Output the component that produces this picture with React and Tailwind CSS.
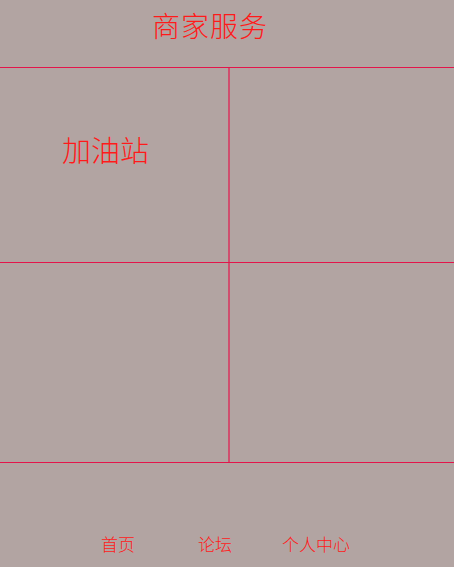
export default function App() {
  const font = { fontFamily: '"Noto Sans CJK SC", "Noto Sans", sans-serif' };
  return (
    <div className="w-[454px] h-[567px] bg-[#b2a4a2] flex flex-col text-[#ff1a1a] overflow-hidden" style={font}>
      <div className="h-[67px] flex items-start pl-[152px] pt-[7px]">
        <span className="text-[28px] leading-[36px] tracking-[1px] font-light">商家服务</span>
      </div>
      <div className="h-px bg-[#e3154b]"></div>
      <div className="flex h-[194px]">
        <div className="w-[228px] pl-[62px] pt-[63px]">
          <span className="text-[29px] leading-[36px] font-light">加油站</span>
        </div>
        <div className="w-[2px] bg-[#e3154b]/60"></div>
        <div className="flex-1"></div>
      </div>
      <div className="h-px bg-[#e3154b]"></div>
      <div className="flex h-[199px]">
        <div className="w-[228px]"></div>
        <div className="w-[2px] bg-[#e3154b]/60"></div>
        <div className="flex-1"></div>
      </div>
      <div className="h-px bg-[#e3154b]"></div>
      <div className="flex-1 flex items-start pt-[70px] text-[17px] leading-[22px] font-light">
        <span className="ml-[101px]">首页</span>
        <span className="ml-[63px]">论坛</span>
        <span className="ml-[50px]">个人中心</span>
      </div>
    </div>
  );
}
